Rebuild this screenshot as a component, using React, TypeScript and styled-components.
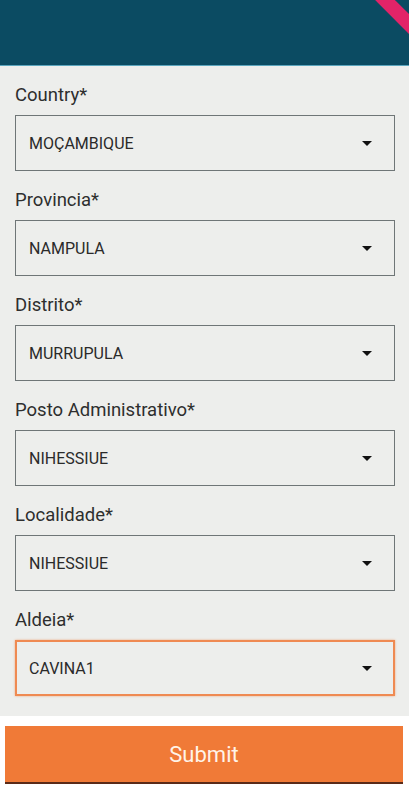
import React from "react";
import styled, { createGlobalStyle } from "styled-components";

const Global = createGlobalStyle`
  html, body { margin: 0; padding: 0; background: #ffffff; }
  body { font-family: Roboto, "Noto Sans", sans-serif; }
  * { box-sizing: border-box; }
`;

const Screen = styled.div`
  width: 409px;
  height: 796px;
  position: relative;
  overflow: hidden;
  background: #ffffff;
  display: flex;
  flex-direction: column;
`;

const Header = styled.header`
  height: 66px;
  background: #0b4b62;
  border-bottom: 1px solid #5aa5bd;
  flex-shrink: 0;
`;

const Form = styled.div`
  background: #edeeec;
  padding: 17px 15px 20px 15px;
  display: flex;
  flex-direction: column;
  gap: 17px;
`;

const Field = styled.div`
  display: flex;
  flex-direction: column;
  gap: 8px;
`;

const Label = styled.label`
  font-size: 18.5px;
  color: #2e2e2e;
  line-height: 24px;
`;

const Select = styled.div<{ $active?: boolean }>`
  height: 56px;
  width: 380px;
  border: ${(p) => (p.$active ? "2px solid #ef8a52" : "1px solid #6f7677")};
  box-shadow: ${(p) => (p.$active ? "0 0 2px rgba(240,123,55,0.6)" : "none")};
  display: flex;
  align-items: center;
  justify-content: space-between;
  padding: ${(p) => (p.$active ? "0 21px 0 12px" : "0 22px 0 13px")};
  font-size: 16px;
  color: #2a2a2a;
`;

const Arrow = styled.span`
  width: 0;
  height: 0;
  border-left: 5px solid transparent;
  border-right: 5px solid transparent;
  border-top: 5px solid #111;
`;

const ButtonWrap = styled.div`
  padding: 10px 6px 0 5px;
`;

const SubmitButton = styled.button`
  width: 398px;
  height: 58px;
  border: none;
  border-bottom: 2px solid #5a2a18;
  background: #f07a37;
  color: #fff3e8;
  font-family: Roboto, "Noto Sans", sans-serif;
  font-size: 22px;
  display: flex;
  align-items: center;
  justify-content: center;
  padding: 0;
`;

const Ribbon = styled.div`
  position: absolute;
  top: 4px;
  right: -42px;
  width: 110px;
  height: 14px;
  background: #e22468;
  transform: rotate(45deg);
  transform-origin: center;
`;

const fields = [
  { label: "Country*", value: "MOÇAMBIQUE" },
  { label: "Provincia*", value: "NAMPULA" },
  { label: "Distrito*", value: "MURRUPULA" },
  { label: "Posto Administrativo*", value: "NIHESSIUE" },
  { label: "Localidade*", value: "NIHESSIUE" },
  { label: "Aldeia*", value: "CAVINA1", active: true },
];

export default function App() {
  return (
    <>
      <Global />
      <Screen>
        <Header />
        <Form>
          {fields.map((f) => (
            <Field key={f.label}>
              <Label>{f.label}</Label>
              <Select $active={f.active}>
                <span>{f.value}</span>
                <Arrow />
              </Select>
            </Field>
          ))}
        </Form>
        <ButtonWrap>
          <SubmitButton>Submit</SubmitButton>
        </ButtonWrap>
        <Ribbon />
      </Screen>
    </>
  );
}
